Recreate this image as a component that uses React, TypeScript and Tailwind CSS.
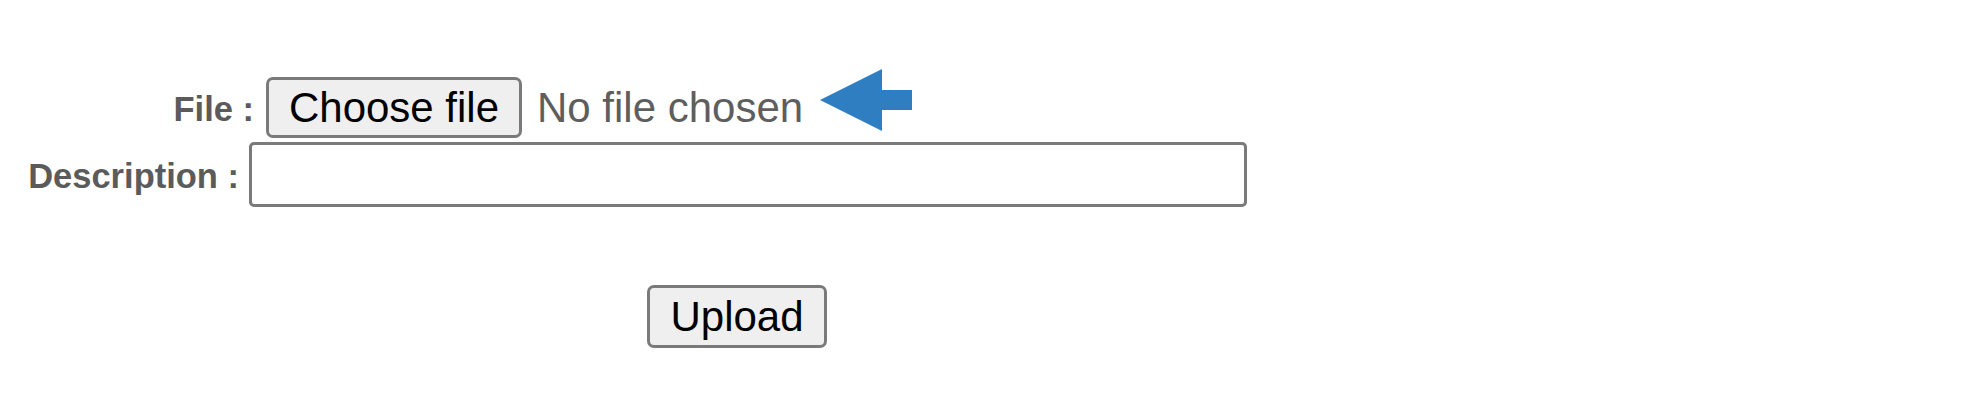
import { useState } from "react";

function ArrowLeft() {
  return (
    <svg width="92" height="62" viewBox="0 0 92 62" className="ml-[17px] mt-[-16px]">
      <polygon points="0,31 62,0 62,21 92,21 92,41 62,41 62,62" fill="#2f7ec1" />
    </svg>
  );
}

export default function App() {
  const [fileName, setFileName] = useState<string | null>(null);
  const [description, setDescription] = useState("");

  return (
    <main className="min-h-screen bg-white font-['Liberation_Sans',Arial,sans-serif] pt-[77px]">
      <form className="flex flex-col" onSubmit={(e) => e.preventDefault()}>
        {/* file row */}
        <div className="flex items-center h-[61px]">
          <span className="w-[254px] text-right text-[34.5px] leading-none font-bold text-[#5b5b5b] mt-[3px]">
            File :
          </span>
          <label className="ml-[12px] flex items-center cursor-pointer">
            <span className="h-[61px] w-[256px] flex items-center justify-center rounded-[7px] border-[3px] border-[#7a7a7a] bg-[#efefef] text-[42px] leading-none text-black">
              Choose file
            </span>
            <input
              type="file"
              className="hidden"
              onChange={(e) => setFileName(e.target.files?.[0]?.name ?? null)}
            />
            <span className="ml-[15px] text-[42px] leading-none text-[#5e5e5e] mt-[1px]">
              {fileName ?? "No file chosen"}
            </span>
          </label>
          <ArrowLeft />
        </div>

        {/* description row */}
        <div className="flex items-center mt-[4px] h-[65px]">
          <span className="w-[239px] text-right text-[34.5px] leading-none font-bold text-[#5b5b5b] mt-[4px]">
            Description :
          </span>
          <input
            type="text"
            value={description}
            onChange={(e) => setDescription(e.target.value)}
            className="ml-[10px] h-[65px] w-[998px] rounded-[5px] border-[3px] border-[#7a7a7a] bg-white px-2 text-[32px] outline-none"
          />
        </div>

        <div className="mt-[78px] pl-[647px]">
          <button
            type="submit"
            className="h-[63px] w-[180px] rounded-[7px] border-[3px] border-[#7a7a7a] bg-[#efefef] text-[42px] leading-none text-black"
          >
            Upload
          </button>
        </div>
      </form>
    </main>
  );
}
